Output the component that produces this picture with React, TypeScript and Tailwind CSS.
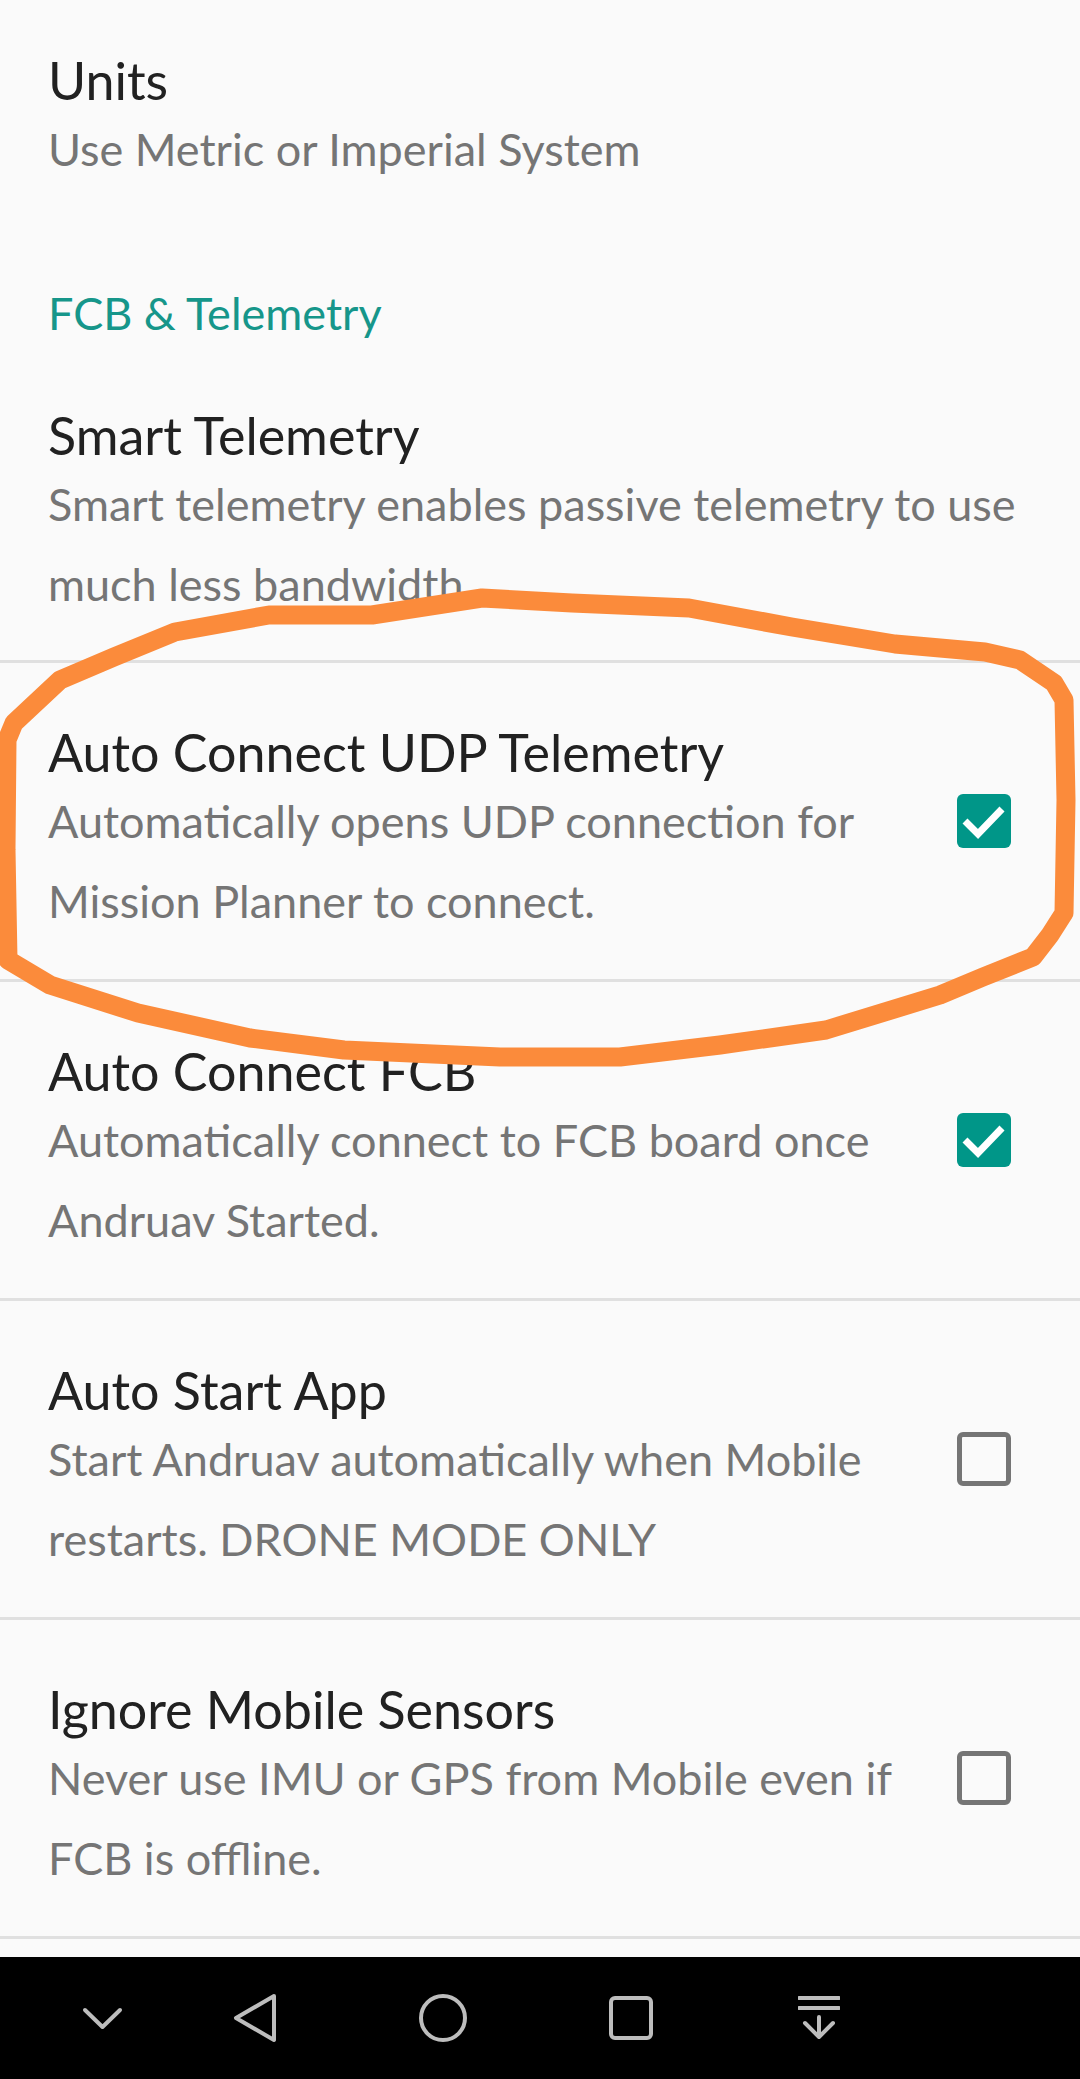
import React from 'react'

const TITLE = "text-[52px] leading-[58px] text-[#212121]"
const SUMMARY = "text-[45px] leading-[80px] text-[#757575]"

function Checkbox({ checked }: { checked: boolean }) {
  if (checked) {
    return (
      <div className="w-[54px] h-[54px] rounded-[6px] bg-[#009688] flex items-center justify-center">
        <svg width="54" height="54" viewBox="0 0 54 54">
          <path d="M8 27 L21 40 L45 15" fill="none" stroke="#ffffff" strokeWidth="7" />
        </svg>
      </div>
    )
  }
  return <div className="w-[54px] h-[54px] rounded-[6px] border-[5px] border-[#757575]" />
}

interface PrefRowProps {
  title: string
  lines: string[]
  checked: boolean
}

function PrefRow({ title, lines, checked }: PrefRowProps) {
  return (
    <div className="border-t-[3px] border-[#e0e0e0] flex items-center pl-[48px] pr-[69px]">
      <div className="flex-1 pt-[60px] pb-[38px]">
        <div className={TITLE}>{title}</div>
        <div className={SUMMARY}>
          {lines.map((l, i) => (
            <div key={i}>{l}</div>
          ))}
        </div>
      </div>
      <Checkbox checked={checked} />
    </div>
  )
}

const rows: PrefRowProps[] = [
  {
    title: 'Auto Connect UDP Telemetry',
    lines: ['Automatically opens UDP connection for', 'Mission Planner to connect.'],
    checked: true,
  },
  {
    title: 'Auto Connect FCB',
    lines: ['Automatically connect to FCB board once', 'Andruav Started.'],
    checked: true,
  },
  {
    title: 'Auto Start App',
    lines: ['Start Andruav automatically when Mobile', 'restarts. DRONE MODE ONLY'],
    checked: false,
  },
  {
    title: 'Ignore Mobile Sensors',
    lines: ['Never use IMU or GPS from Mobile even if', 'FCB is offline.'],
    checked: false,
  },
]

function NavBar() {
  const c = '#bdbdbd'
  return (
    <div className="h-[122px] bg-black flex items-center pl-[64px]">
      <div className="w-[76px] flex justify-center">
        <svg width="41" height="23" viewBox="0 0 41 23">
          <path d="M3 3 L20.5 20 L38 3" fill="none" stroke={c} strokeWidth="4" strokeLinecap="round" strokeLinejoin="round" />
        </svg>
      </div>
      <div className="ml-[21px] w-[188px] flex justify-center">
        <svg width="46" height="52" viewBox="0 0 46 52">
          <path d="M42 4 L4 26 L42 48 Z" fill="none" stroke={c} strokeWidth="4" strokeLinejoin="round" />
        </svg>
      </div>
      <div className="w-[188px] flex justify-center">
        <svg width="48" height="48" viewBox="0 0 48 48">
          <circle cx="24" cy="24" r="22" fill="none" stroke={c} strokeWidth="4" />
        </svg>
      </div>
      <div className="w-[188px] flex justify-center">
        <svg width="44" height="44" viewBox="0 0 44 44">
          <rect x="2" y="2" width="40" height="40" rx="4" fill="none" stroke={c} strokeWidth="4" />
        </svg>
      </div>
      <div className="w-[188px] flex justify-center">
        <svg width="42" height="44" viewBox="0 0 42 44">
          <path d="M1 2 H41 M1 12 H41" stroke={c} strokeWidth="4" strokeLinecap="round" />
          <path d="M21 21 V41 M7 27 L21 41 L35 27" fill="none" stroke={c} strokeWidth="4" strokeLinecap="round" strokeLinejoin="round" />
        </svg>
      </div>
    </div>
  )
}

export default function App() {
  return (
    <div className="relative w-[1080px] h-[2079px] bg-[#fafafa] flex flex-col font-['Lato',sans-serif] overflow-hidden">
      <div className="flex-1">
        {/* Units */}
        <div className="pl-[48px] pt-[51px]">
          <div className={TITLE}>Units</div>
          <div className={SUMMARY}>Use Metric or Imperial System</div>
        </div>

        {/* Category */}
        <div className="pl-[48px] pt-[95px] text-[45px] leading-[58px] text-[#16968a]">FCB &amp; Telemetry</div>

        {/* Smart Telemetry */}
        <div className="pl-[48px] pt-[64px] pb-[36px]">
          <div className={TITLE}>Smart Telemetry</div>
          <div className={SUMMARY}>
            <div>Smart telemetry enables passive telemetry to use</div>
            <div>much less bandwidth</div>
          </div>
        </div>

        {rows.map(r => (
          <PrefRow key={r.title} {...r} />
        ))}
        <div className="border-t-[3px] border-[#e0e0e0]" />
      </div>

      <NavBar />

      {/* hand-drawn highlight */}
      <svg className="absolute left-0 top-0 pointer-events-none" width="1080" height="2079" viewBox="0 0 1080 2079">
        <polyline
          points="14,723 60,680 114,657 175,632 269,615 372,615 482,598 572,603 689,608 792,627 895,644 985,652 1020,660 1054,683 1064,700 1066,800 1064,913 1050,935 1033,957 983,977 940,995 826,1030 720,1045 620,1057 500,1057 344,1050 250,1038 138,1013 50,985 8,960 6,850 7,740 14,723"
          fill="none"
          stroke="#fb8b3b"
          strokeWidth="19"
          strokeLinejoin="round"
          strokeLinecap="round"
        />
      </svg>
    </div>
  )
}
